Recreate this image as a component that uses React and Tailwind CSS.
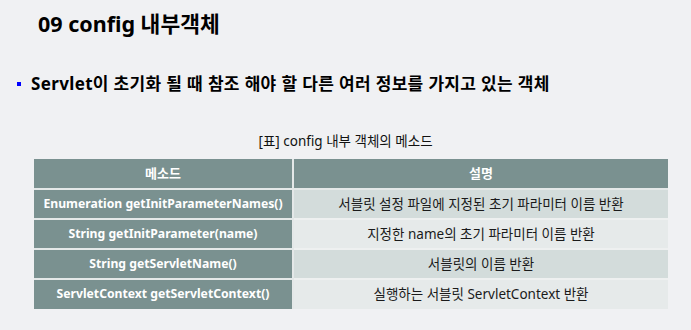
export default function App() {
  const rows = [
    ["Enumeration getInitParameterNames()", "서블릿 설정 파일에 지정된 초기 파라미터 이름 반환", "bg-[#d3dcdb]"],
    ["String getInitParameter(name)", "지정한 name의 초기 파라미터 이름 반환", "bg-[#e6eaea]"],
    ["String getServletName()", "서블릿의 이름 반환", "bg-[#d3dcdb]"],
    ["ServletContext getServletContext()", "실행하는 서블릿 ServletContext 반환", "bg-[#e6eaea]"],
  ];
  return (
    <div
      className="w-[691px] h-[330px] bg-[#f0f1f3] overflow-hidden text-black"
      style={{ fontFamily: '"Noto Sans", "Noto Sans CJK KR", sans-serif' }}
    >
      <div className="pl-[38px] pt-[9px] text-[21.5px] font-bold leading-[30px]">09 config 내부객체</div>
      <div className="flex items-center pl-[17px] mt-[34px]">
        <div className="w-[4px] h-[4px] bg-[#0000ff] mr-[10px]" />
        <div className="text-[17px] font-bold leading-[22px] tracking-[0.35px]">Servlet이 초기화 될 때 참조 해야 할 다른 여러 정보를 가지고 있는 객체</div>
      </div>
      <div className="text-center text-[13.5px] leading-[18px] mt-[37px] text-[#111]">[표] config 내부 객체의 메소드</div>
      <div className="pl-[34px] mt-[9px]">
        <table className="border-collapse w-[634px] text-[13.5px]">
          <thead>
            <tr className="bg-[#7a9190] text-white">
              <th className="w-[259px] h-[30px] border-r-2 border-b-2 border-[#e4e8e8] font-bold p-0 text-[13px]">메소드</th>
              <th className="h-[30px] border-b-2 border-[#e4e8e8] font-bold p-0 text-[13px]">설명</th>
            </tr>
          </thead>
          <tbody>
            {rows.map((r, i) => (
              <tr key={i}>
                <td className={`bg-[#7a9190] text-white font-bold text-center text-[12.2px] h-[30px] p-0 border-r-2 border-[#e4e8e8] ${i < 3 ? "border-b-2" : ""}`}>{r[0]}</td>
                <td className={`${r[2]} text-[#1a1a1a] text-center h-[30px] p-0 ${i < 3 ? "border-b-2 border-[#eef0f0]" : ""}`}>{r[1]}</td>
              </tr>
            ))}
          </tbody>
        </table>
      </div>
    </div>
  );
}
